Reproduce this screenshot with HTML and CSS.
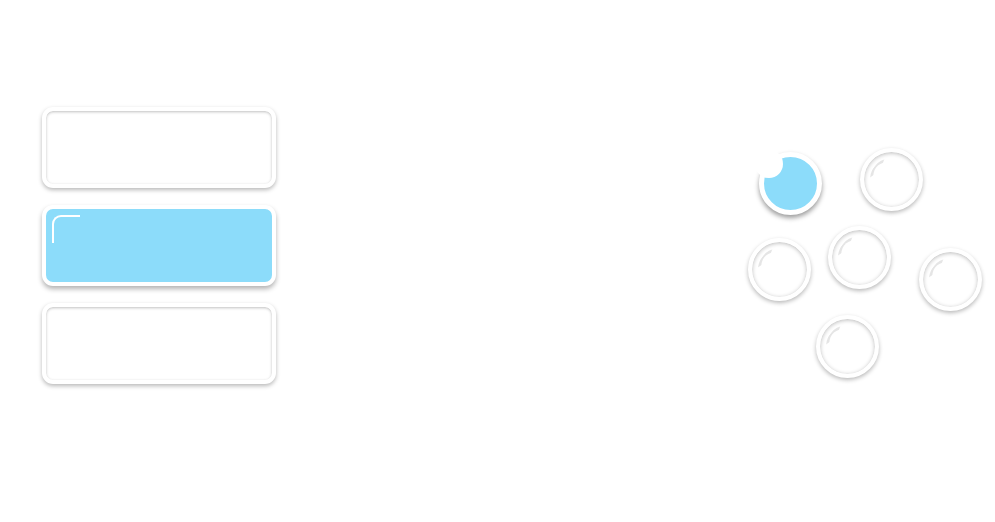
FILE: index.html
```html
<!DOCTYPE html>
<html lang="en">
<head>
  <meta charset="UTF-8" />
  <title>Selector</title>
  <link rel="stylesheet" href="styles.css">
</head>
<body>
  <main class="page">
    <!-- list of options -->
    <section class="options">
      <div class="option"></div>
      <div class="option active"></div>
      <div class="option"></div>
    </section>

    <!-- bubble cluster -->
    <section class="bubbles">
      <div class="bubble active" style="left: 30px; top: 23px;"></div>
      <div class="bubble" style="left: 131px; top: 19px;"></div>
      <div class="bubble" style="left: 19px; top: 109px;"></div>
      <div class="bubble" style="left: 99px; top: 97px;"></div>
      <div class="bubble" style="left: 190px; top: 119px;"></div>
      <div class="bubble" style="left: 87px; top: 186px;"></div>
    </section>
  </main>
</body>
</html>
```

FILE: styles.css
```css
:root {
  --blue: #8cdcfa;
  --ring: #ffffff;
}

* {
  box-sizing: border-box;
}

body {
  margin: 0;
  background: #ffffff;
  font-family: 'Liberation Sans', sans-serif;
}

.page {
  display: flex;
  justify-content: space-between;
  width: 995px;
  height: 522px;
  padding: 107px 0 0 42px;
}

.options {
  display: flex;
  flex-direction: column;
  gap: 17px;
}

.option {
  position: relative;
  width: 234px;
  height: 81px;
  border: 4px solid var(--ring);
  border-radius: 11px;
  background: #ffffff;
  box-shadow: 0 2px 4px rgba(0, 0, 0, 0.28), inset 0 1px 3px rgba(0, 0, 0, 0.25);
}

.option.active {
  background: var(--blue);
  box-shadow: 0 3px 5px rgba(0, 0, 0, 0.3);
}

/* corner highlight */
.option.active::after {
  content: "";
  position: absolute;
  left: 6px;
  top: 6px;
  width: 26px;
  height: 26px;
  border-top: 2px solid #ffffff;
  border-left: 2px solid #ffffff;
  border-top-left-radius: 9px;
}

.bubbles {
  position: relative;
  width: 266px;
  height: 300px;
  margin-top: 22px;
}

.bubble {
  position: absolute;
  width: 63px;
  height: 63px;
  border: 4px solid var(--ring);
  border-radius: 50%;
  background: #ffffff;
  box-shadow: 0 2px 4px rgba(0, 0, 0, 0.28), inset 0 1px 4px rgba(0, 0, 0, 0.28);
}

/* glossy highlight */
.bubble::after {
  content: "";
  position: absolute;
  inset: 6px;
  border-radius: 50%;
  border: 2px solid transparent;
  border-left-width: 6px;
  border-right-width: 6px;
  border-top-color: rgba(0, 0, 0, 0.1);
  transform: rotate(-52deg);
}

.bubble.active {
  background: var(--blue);
  border-width: 5px;
  box-shadow: 0 3px 5px rgba(0, 0, 0, 0.4);
}

.bubble.active::after {
  display: none;
}

/* bite at the top left */
.bubble.active::before {
  content: "";
  position: absolute;
  left: -9px;
  top: -7px;
  width: 28px;
  height: 28px;
  border-radius: 50%;
  background: #ffffff;
}
```
